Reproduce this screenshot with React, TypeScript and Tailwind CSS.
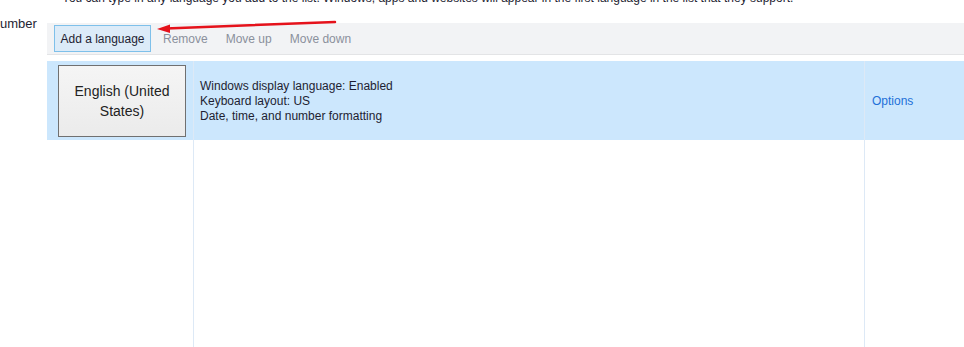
export default function App() {
  const font = { fontFamily: '"Liberation Sans", Arial, sans-serif' };

  return (
    <div
      className="relative h-[347px] w-[964px] overflow-hidden bg-white text-[12px] text-[#1e1e32]"
      style={font}
    >
      <div className="flex h-full">
        {/* cut-off left navigation */}
        <div className="w-[47px] shrink-0 pt-[16px] text-[13px] leading-[15px] whitespace-nowrap">
          umber
        </div>

        <div className="flex min-w-0 flex-1 flex-col">
          <p className="mt-[-9px] pl-[15px] leading-[15px] whitespace-nowrap">
            You can type in any language you add to the list. Windows, apps and websites will appear in the first language in the list that they support.
          </p>

          {/* toolbar */}
          <div className="mt-[17px] flex h-[32px] items-center border-b border-[#e3e4e6] bg-[#f2f3f5] pl-[7px]">
            <button className="h-[27px] w-[97px] border border-[#7ec0ea] bg-[#dcebf8] text-[12px] text-[#1e1e32]">
              Add a language
            </button>
            <span className="ml-[12px] text-[#8a909c]">Remove</span>
            <span className="ml-[18px] text-[#8a909c]">Move up</span>
            <span className="ml-[18px] text-[#8a909c]">Move down</span>
          </div>

          {/* language list */}
          <div className="mt-[6px] flex flex-1">
            <div className="flex w-[146px] shrink-0 flex-col">
              <div className="flex h-[79px] items-center bg-[#cce7fd] pl-[11px]">
                <div className="flex h-[72px] w-[128px] items-center justify-center border-[1.5px] border-[#707070] bg-gradient-to-b from-[#f5f5f5] to-[#ebebeb] text-center text-[14px] leading-[20px] text-[#222]">
                  English (United
                  <br />
                  States)
                </div>
              </div>
            </div>
            <div className="flex w-[671px] shrink-0 flex-col border-l border-[#dde9f6]">
              <div className="flex h-[79px] flex-col justify-center bg-[#cce7fd] pt-[2px] pl-[6px] leading-[15px]">
                <span>Windows display language: Enabled</span>
                <span>Keyboard layout: US</span>
                <span>Date, time, and number formatting</span>
              </div>
            </div>
            <div className="flex flex-1 flex-col border-l border-[#dde9f6]">
              <div className="flex h-[79px] items-center bg-[#cce7fd] pl-[7px] text-[#2270d8]">
                Options
              </div>
            </div>
          </div>
        </div>
      </div>

      {/* red annotation arrow */}
      <svg
        className="pointer-events-none absolute left-0 top-0"
        width="964"
        height="347"
      >
        <line x1="335" y1="22" x2="166" y2="28.5" stroke="#e5121b" strokeWidth="2.5" strokeLinecap="round" />
        <polygon points="157,29 170,24.5 170,33" fill="#e5121b" />
      </svg>
    </div>
  );
}
